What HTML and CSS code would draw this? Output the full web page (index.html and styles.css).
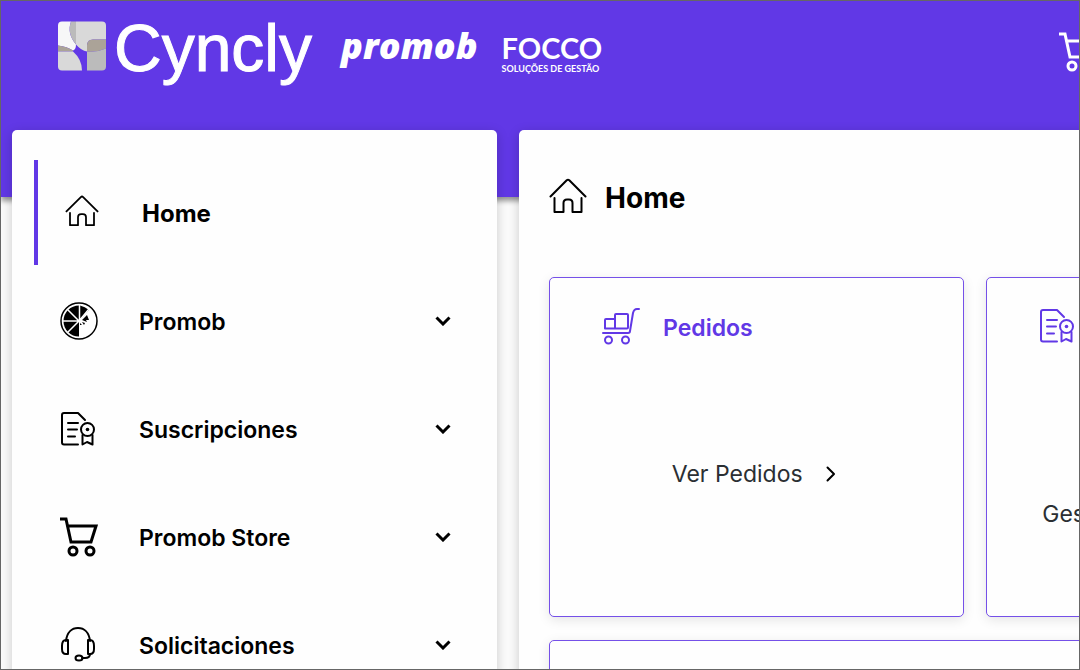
FILE: index.html
```html
<!DOCTYPE html>
<html lang="es">

<head>
  <meta charset="UTF-8">
  <meta name="viewport" content="width=device-width, initial-scale=1.0">
  <title>Home | Cyncly</title>
  <link rel="stylesheet" href="styles.css">
</head>

<body>
  <!-- Shared icons -->
  <svg class="icon-defs" aria-hidden="true">
    <symbol id="icon-home" viewBox="0 0 38 36">
      <path d="M1.500 18.500 17.700 2.300q1.300-1.200 2.600 0L36.500 18.500M5.500 20v14h9v-9q0-3.500 3.500-3.500h2q3.500 0 3.500 3.500v9h9V20" />
    </symbol>
    <symbol id="icon-doc" viewBox="0 0 38 36">
      <path d="M18 33.500H4q-2 0-2-2V4q0-2 2-2h14l7 7M8 12h10M8 18.500h9M8 25.500h7" />
      <circle cx="27.500" cy="18.500" r="6.500" />
      <circle class="dot" cx="27.500" cy="18.500" r="1.800" />
      <path d="M22.500 24v9.500l4.500-2.500 5.500 2.500V24" />
    </symbol>
    <symbol id="icon-cart" viewBox="0 0 38 40">
      <path d="M0 2h6l5 23h20l5-16H7.500" />
      <circle cx="13" cy="34" r="4" />
      <circle cx="30" cy="34" r="4" />
    </symbol>
    <symbol id="icon-down" viewBox="0 0 16 10">
      <path d="M1.500 1.500 8 8l6.500-6.500" />
    </symbol>
  </svg>

  <header class="header">
    <div class="header-inner">
      <a class="logo-cyncly" href="#">
        <svg class="logo-mark" viewBox="0 0 48 49" aria-hidden="true">
          <path fill="#f7f7f7" d="M4 0h9c-3 8-1 16 5 23q0 5-3 6Q9 25 0 24V4q0-4 4-4z" />
          <path fill="#bbbbbb" d="M13 0h5v23c-6-7-8-15-5-23z" />
          <path fill="#d9d9d9" d="M18 0h26q4 0 4 4v14H35q-6 0-6 6v6q-6-1-11-7z" />
          <path fill="#aba398" d="M48 18H35q-6 0-6 6v6q10 1 19-3zM0 24q9 1 15 5v1H0z" />
          <path fill="#bbbbbb" d="M29 30q10 1 19-3v18q0 4-4 4H29z" />
          <path fill="#d9d9d9" d="M0 30h15q9 8 9 19H4q-4 0-4-4z" />
        </svg>
        <span class="cyncly-name">Cyncly</span>
      </a>
      <a class="logo-promob" href="#">promob</a>
      <a class="logo-focco" href="#">
        <span class="focco-name">FOCCO</span>
        <span class="focco-tagline">SOLUÇÕES DE GESTÃO</span>
      </a>
      <button class="btn-cart" type="button" aria-label="Carrito">
        <svg class="icon icon-cart"><use href="#icon-cart" /></svg>
      </button>
    </div>
  </header>

  <div class="page">
    <nav class="sidebar">
      <a class="menu-item active" href="#">
        <svg class="icon icon-menu-home"><use href="#icon-home" /></svg>
        <span class="menu-label">Home</span>
      </a>
      <button class="menu-item" type="button">
        <svg class="icon" viewBox="0 0 38 38">
          <circle cx="19" cy="19" r="18" stroke-width="1.500" />
          <path class="solid" d="M19 19V3.500a15.500 15.500 0 0 0 0 31z" />
          <path class="solid" d="M20 18V3.500q5 1 9 4.500zM22 18l5-5 2 5-3 0 1 2zM22 20l3 1-1 2zM20 21l2 2h-2z" />
          <path class="slices" d="M19 19H3M19 19 8 8M19 19 8 30M19.500 19V3M19 19 29 7" />
        </svg>
        <span class="menu-label">Promob</span>
        <svg class="icon-chevron"><use href="#icon-down" /></svg>
      </button>
      <button class="menu-item" type="button">
        <svg class="icon icon-doc"><use href="#icon-doc" /></svg>
        <span class="menu-label">Suscripciones</span>
        <svg class="icon-chevron"><use href="#icon-down" /></svg>
      </button>
      <button class="menu-item" type="button">
        <svg class="icon icon-cart"><use href="#icon-cart" /></svg>
        <span class="menu-label">Promob Store</span>
        <svg class="icon-chevron"><use href="#icon-down" /></svg>
      </button>
      <button class="menu-item" type="button">
        <svg class="icon" viewBox="0 0 38 38">
          <path d="M6 15C7 6 12 2 18 2s11 4 12 13M30 28q0 4-5 4h-3" />
          <path d="M8 14v14H6q-4 0-4-5v-3q0-6 4-6zM28 14v14h2q4 0 4-5v-3q0-6-4-6z" />
          <ellipse cx="19" cy="32" rx="3.500" ry="2.500" />
        </svg>
        <span class="menu-label">Solicitaciones</span>
        <svg class="icon-chevron"><use href="#icon-down" /></svg>
      </button>
    </nav>

    <main class="content">
      <div class="content-header">
        <svg class="icon icon-title"><use href="#icon-home" /></svg>
        <h1 class="content-title">Home</h1>
      </div>

      <div class="cards">
        <section class="card">
          <div class="card-header">
            <svg class="icon" viewBox="0 0 38 38">
              <path d="M1 25h25q2 0 2-2l3-18q1-4 4-4h2M3 20.500V12q0-1 1-1h9M3 20.500h22q1 0 1-1V7q0-1-1-1H14q-1 0-1 1v13.500" />
              <circle cx="6.500" cy="32" r="3.500" />
              <circle cx="23.500" cy="32" r="3.500" />
            </svg>
            <h2 class="card-title">Pedidos</h2>
          </div>
          <a class="card-link" href="#">
            Ver Pedidos
            <svg class="icon-next" viewBox="0 0 10 16"><path d="M1.500 1.500 8 8l-6.500 6.500" /></svg>
          </a>
        </section>

        <section class="card card-subscriptions">
          <div class="card-header">
            <svg class="icon icon-doc"><use href="#icon-doc" /></svg>
            <h2 class="card-title">Suscripciones</h2>
          </div>
          <a class="card-link" href="#">Gestionar</a>
        </section>

        <section class="card card-wide"></section>
      </div>
    </main>
  </div>
</body>

</html>
```
FILE: styles.css
```css
:root {
  --primary: #6138e6;
  --border: #7550e8;
  --text: #000;
  --link: #2b2f33;
  --panel: #fefefe;
}

* {
  box-sizing: border-box;
}

body {
  height: 100vh;
  margin: 0;
  border: 1px solid #666;
  overflow: hidden;
  background: #fbfbfb;
  color: var(--text);
  font-family: Inter, sans-serif;
  font-size: 23px;
  line-height: 32px;
}

a {
  color: inherit;
  text-decoration: none;
}

button {
  padding: 0;
  border: none;
  background: none;
  color: inherit;
  font: inherit;
  cursor: pointer;
}

.icon-defs {
  display: none;
}

.icon,
.icon-chevron,
.icon-next {
  flex: none;
  width: 38px;
  height: 38px;
  fill: none;
  stroke: currentColor;
  stroke-width: 2;
  stroke-linecap: round;
  stroke-linejoin: round;
}

.solid,
.dot {
  fill: currentColor;
  stroke: none;
}

.slices {
  stroke: var(--panel);
  stroke-width: 1.5;
}

/* Header */
.header {
  height: 196px;
  background: var(--primary);
  box-shadow: 0 4px 5px rgba(0, 0, 0, 0.4);
  color: #fff;
}

.header-inner {
  display: flex;
  align-items: flex-start;
  width: 104%;
  padding: 20px 25px 0 57px;
}

.logo-cyncly {
  display: flex;
  gap: 8px;
}

.logo-mark {
  width: 48px;
  height: 50px;
}

.cyncly-name {
  font-family: "Liberation Sans", sans-serif;
  font-size: 66px;
  line-height: 54px;
  -webkit-text-stroke: 1px #fff;
}

.logo-promob {
  margin-left: 29px;
  font-family: "Open Sans", sans-serif;
  font-size: 36px;
  font-style: italic;
  font-weight: 800;
  line-height: 50px;
}

.logo-focco {
  display: flex;
  flex-direction: column;
  margin: 12px 0 0 24px;
  font-family: Lato, sans-serif;
  font-weight: 700;
}

.focco-name {
  font-size: 29px;
  line-height: 30px;
}

.focco-tagline {
  font-size: 9px;
  line-height: 12px;
}

.btn-cart {
  margin: 11px 0 0 auto;
}

.icon-cart {
  height: 40px;
  stroke-width: 3;
  stroke-linecap: butt;
  stroke-linejoin: miter;
}

/* Page */
.page {
  display: flex;
  gap: 22px;
  margin-top: -67px;
}

.sidebar,
.content {
  border-radius: 5px;
  background: var(--panel);
  box-shadow: 0 3px 12px rgba(0, 0, 0, 0.2);
}

.sidebar {
  display: flex;
  flex: 0 0 45%;
  flex-direction: column;
  gap: 3px;
  margin-left: 11px;
  padding: 30px 22px;
}

.menu-item {
  display: flex;
  align-items: center;
  gap: 41px;
  min-height: 105px;
  padding: 0 24px 0 26px;
  font-weight: 600;
  text-align: left;
}

.menu-item.active {
  padding-left: 25px;
  border-left: 4px solid var(--primary);
  font-size: 24px;
  font-weight: 700;
}

.menu-label {
  flex: 1;
  padding-top: 2px;
}

.icon-menu-home {
  height: 32px;
  margin-bottom: 4px;
}

.icon-doc {
  height: 36px;
}

.icon-chevron {
  width: 16px;
  height: 10px;
  stroke-width: 3;
  stroke-linecap: butt;
  stroke-linejoin: miter;
}

/* Content */
.content {
  flex: 0 0 85%;
  padding: 48px 34px 48px 30px;
}

.content-header {
  display: flex;
  align-items: center;
  gap: 18px;
  margin-bottom: 63px;
}

.icon-title {
  height: 36px;
}

.content-title {
  margin: 0;
  padding-top: 4px;
  font-size: 28px;
  font-weight: 700;
  line-height: 32px;
}

.cards {
  display: grid;
  grid-template-columns: 1fr 1fr;
  gap: 23px 22px;
}

.card {
  min-height: 340px;
  border: 1px solid var(--border);
  border-radius: 5px;
  background: var(--panel);
  box-shadow: 0 3px 12px rgba(0, 0, 0, 0.1);
}

.card-wide {
  grid-column: span 2;
}

.card-header {
  display: flex;
  align-items: center;
  gap: 23px;
  padding: 30px 52px 0;
  color: var(--primary);
}

.card-title {
  margin: 0;
  padding-top: 2px;
  font-size: 23px;
  font-weight: 600;
  line-height: 32px;
}

.card-link {
  display: flex;
  align-items: center;
  justify-content: center;
  gap: 23px;
  margin-top: 112px;
  padding-right: 6px;
  color: var(--link);
}

.card-subscriptions .card-link {
  justify-content: flex-start;
  margin-top: 154px;
  padding-left: 55px;
}

.icon-next {
  width: 10px;
  height: 16px;
  color: var(--text);
}
```
